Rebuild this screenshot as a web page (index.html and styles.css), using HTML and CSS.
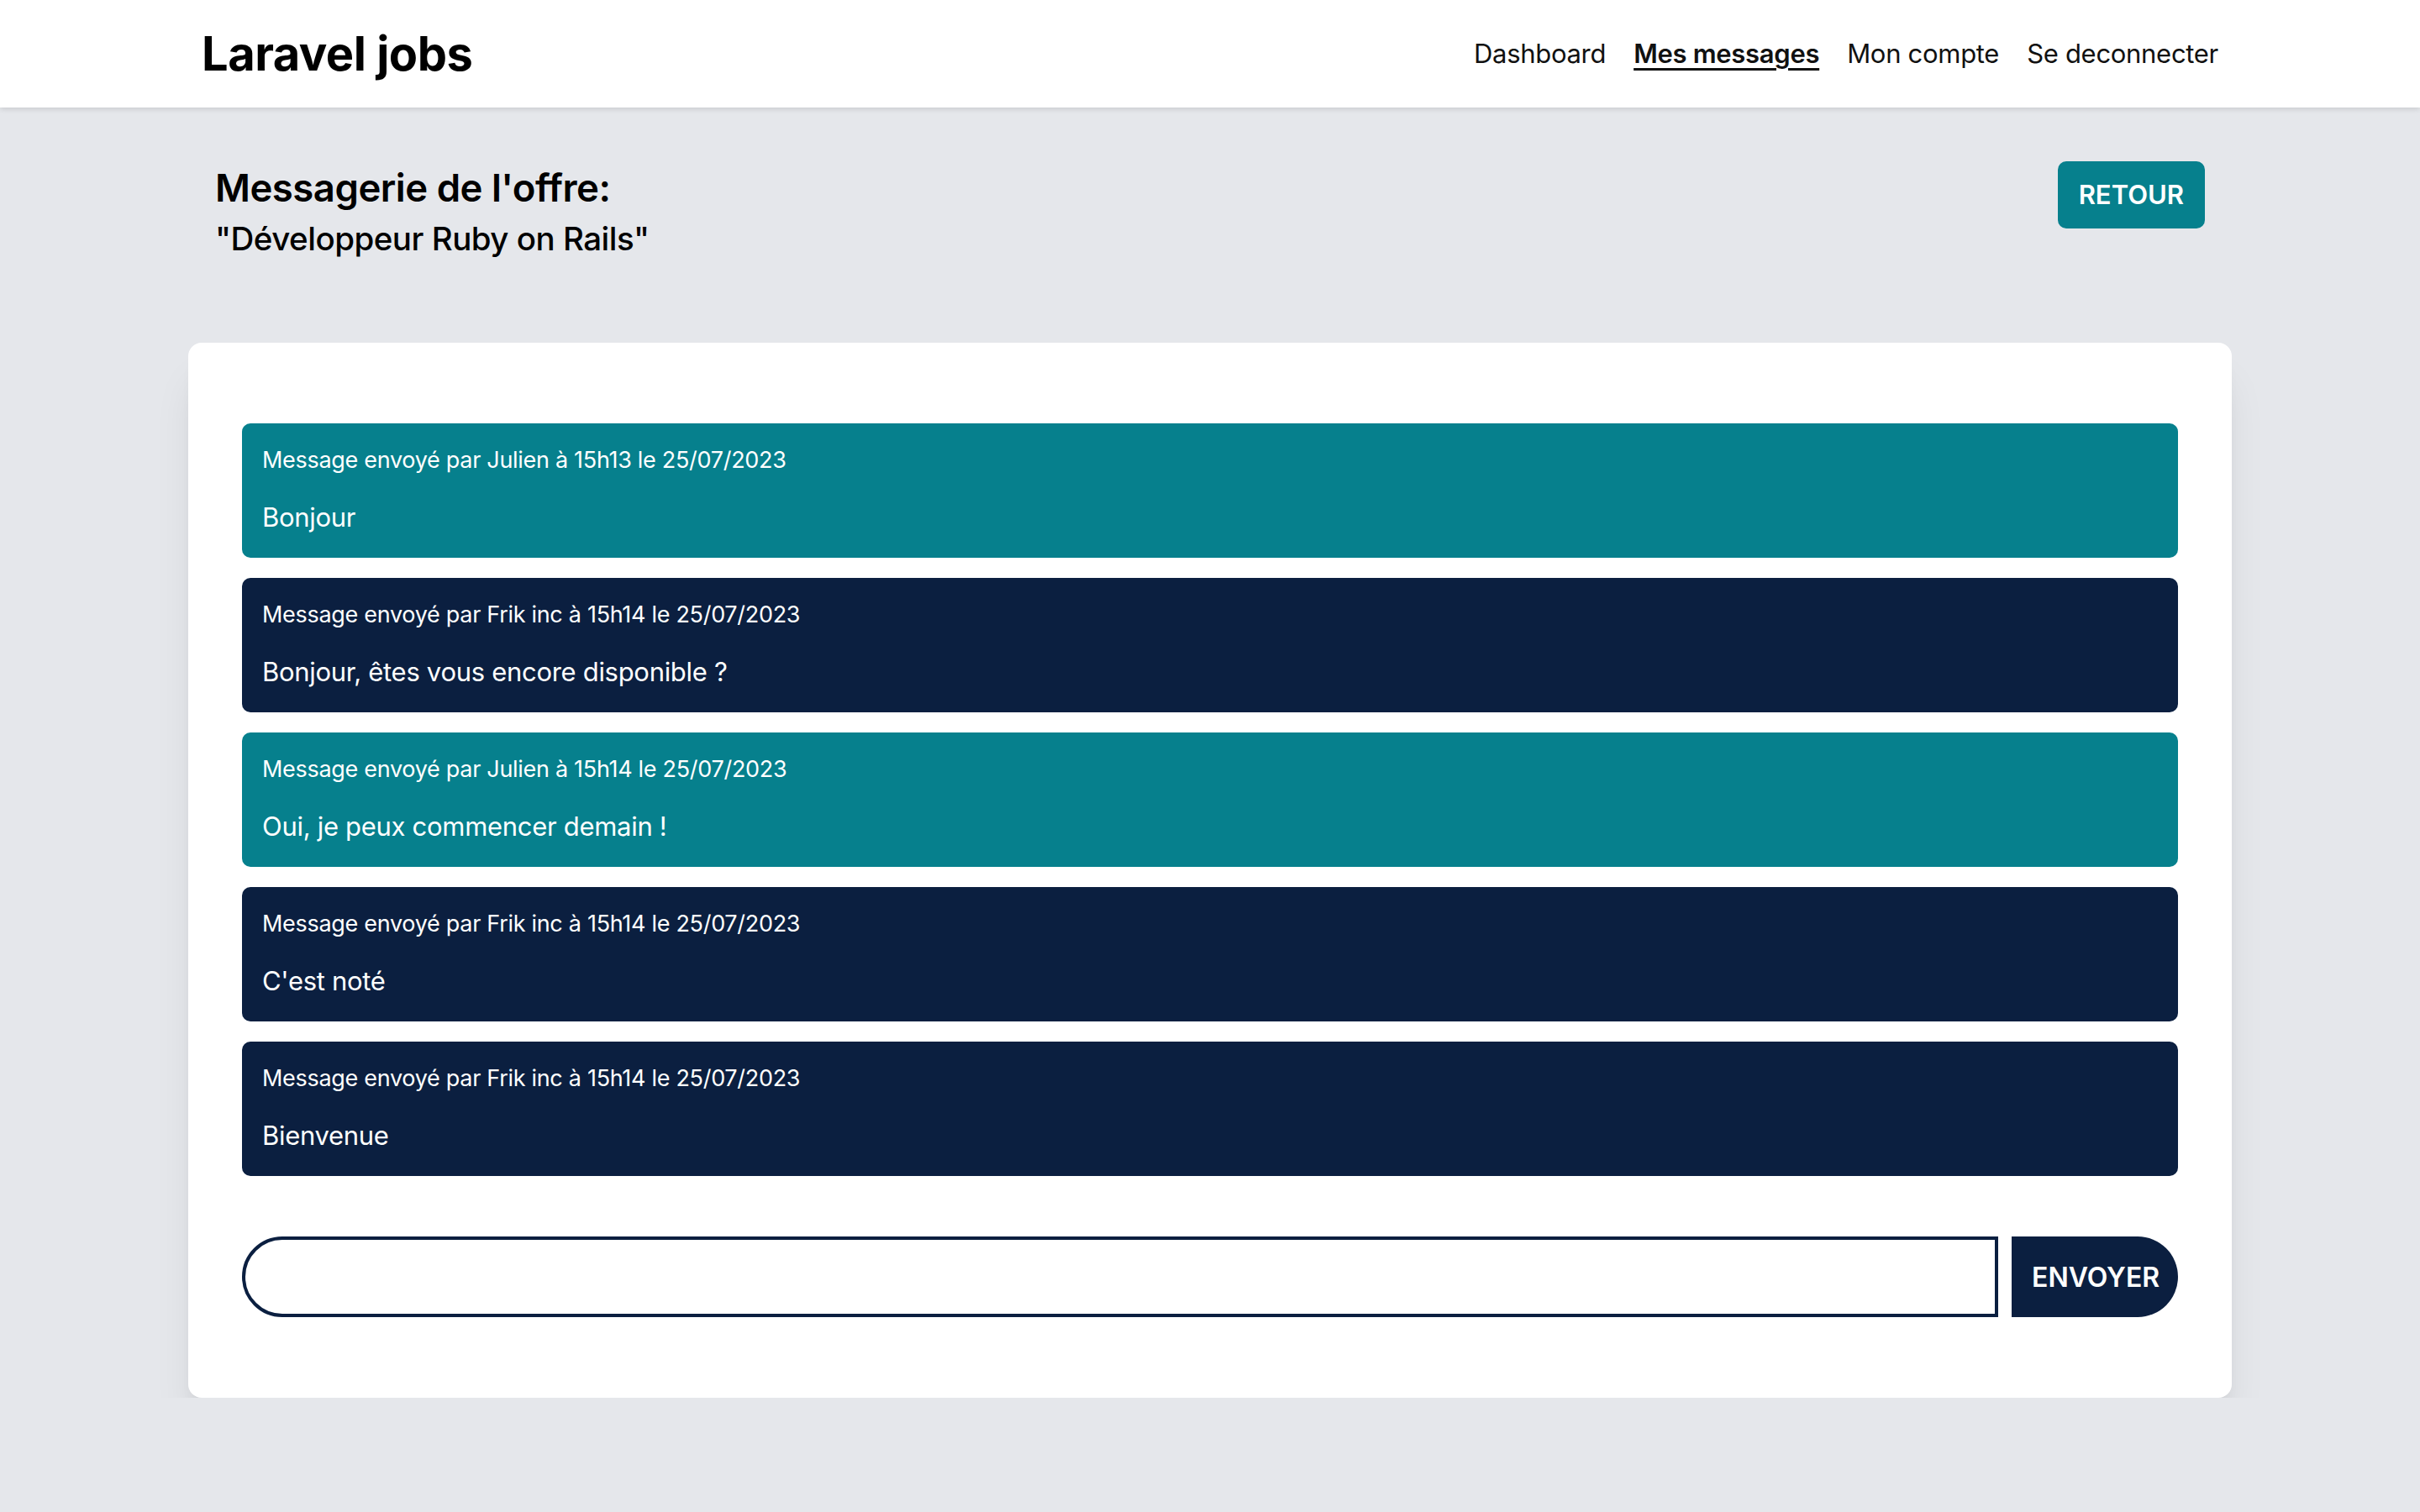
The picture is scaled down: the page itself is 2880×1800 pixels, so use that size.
FILE: index.html
```html
<!DOCTYPE html>
<html lang="fr">
<head>
<meta charset="utf-8">
<title>Laravel jobs - Messagerie</title>
<link rel="stylesheet" href="styles.css">
</head>
<body>
<header class="topbar">
  <div class="topbar-inner">
    <a class="brand" href="#">Laravel jobs</a>
    <nav class="nav">
      <a href="#">Dashboard</a>
      <a href="#" class="active">Mes messages</a>
      <a href="#">Mon compte</a>
      <a href="#">Se deconnecter</a>
    </nav>
  </div>
</header>
<main class="page">
  <div class="page-head">
    <div class="titles">
      <h1 class="title">Messagerie de l'offre:</h1>
      <h2 class="subtitle">"Développeur Ruby on Rails"</h2>
    </div>
    <a class="btn-back" href="#">RETOUR</a>
  </div>
  <section class="card">
    <div class="thread">
      <div class="msg msg-me">
        <p class="meta">Message envoyé par Julien à 15h13 le 25/07/2023</p>
        <p class="body">Bonjour</p>
      </div>
      <div class="msg msg-other">
        <p class="meta">Message envoyé par Frik inc à 15h14 le 25/07/2023</p>
        <p class="body">Bonjour, êtes vous encore disponible ?</p>
      </div>
      <div class="msg msg-me">
        <p class="meta">Message envoyé par Julien à 15h14 le 25/07/2023</p>
        <p class="body">Oui, je peux commencer demain !</p>
      </div>
      <div class="msg msg-other">
        <p class="meta">Message envoyé par Frik inc à 15h14 le 25/07/2023</p>
        <p class="body">C'est noté</p>
      </div>
      <div class="msg msg-other">
        <p class="meta">Message envoyé par Frik inc à 15h14 le 25/07/2023</p>
        <p class="body">Bienvenue</p>
      </div>
    </div>
    <form class="composer" onsubmit="return false">
      <input class="composer-input" type="text" name="content">
      <button class="composer-send" type="submit">ENVOYER</button>
    </form>
  </section>
</main>
</body>
</html>
```
FILE: styles.css
```css
* { box-sizing: border-box; }

body {
  margin: 0;
  background: #e5e7eb;
  font-family: Inter, "Noto Sans", sans-serif;
  color: #000;
}

p, h1, h2 { margin: 0; }

.topbar {
  background: #fff;
  height: 128px;
  box-shadow: 0 2px 6px rgba(0, 0, 0, 0.12);
}

.topbar-inner {
  width: 2400px;
  height: 100%;
  margin: 0 auto;
  display: flex;
  align-items: center;
  justify-content: space-between;
}

.brand {
  font-size: 56px;
  line-height: 72px;
  font-weight: 700;
  color: #000;
  text-decoration: none;
  letter-spacing: -0.5px;
}

.nav {
  display: flex;
  gap: 33px;
}

.nav a {
  font-size: 31px;
  line-height: 48px;
  color: #111;
  text-decoration: none;
  letter-spacing: -0.3px;
}

.nav a.active {
  font-weight: 600;
  text-decoration: underline;
  text-decoration-thickness: 3px;
  text-underline-offset: 6px;
}

.page {
  width: 2432px;
  margin: 0 auto;
}

.page-head {
  display: flex;
  justify-content: space-between;
  align-items: flex-start;
  padding: 64px 32px 0;
}

.title {
  font-size: 45.5px;
  line-height: 64px;
  font-weight: 600;
  letter-spacing: -0.5px;
}

.subtitle {
  font-size: 38.5px;
  line-height: 56px;
  font-weight: 500;
  letter-spacing: -0.5px;
}

.btn-back {
  display: block;
  background: #06808d;
  color: #fff;
  text-decoration: none;
  font-size: 31px;
  line-height: 48px;
  font-weight: 600;
  padding: 16px 25px;
  border-radius: 10px;
}

.card {
  margin-top: 96px;
  background: #fff;
  border-radius: 16px;
  padding: 96px 64px;
  box-shadow: 0 40px 50px -10px rgba(0, 0, 0, 0.1), 0 16px 20px -12px rgba(0, 0, 0, 0.1);
}

.thread {
  display: flex;
  flex-direction: column;
  gap: 24px;
}

.msg {
  padding: 24px;
  border-radius: 10px;
  color: #fff;
}

.msg-me { background: #06808d; }
.msg-other { background: #0b1f40; }

.meta {
  font-size: 27px;
  line-height: 40px;
  letter-spacing: -0.3px;
}

.body {
  margin-top: 24px;
  font-size: 31px;
  line-height: 48px;
  letter-spacing: -0.3px;
}

.composer {
  margin-top: 72px;
  display: flex;
  gap: 16px;
  height: 96px;
}

.composer-input {
  flex: 1;
  border: 4px solid #0b1f40;
  border-radius: 48px 0 0 48px;
  background: #fff;
  font-size: 32px;
  padding: 0 32px;
  outline: none;
}

.composer-send {
  background: #0b1f40;
  color: #fff;
  border: 0;
  border-radius: 0 48px 48px 0;
  padding: 0 24px;
  width: 198px;
  font-family: inherit;
  font-size: 32px;
  font-weight: 600;
  cursor: pointer;
}
```
